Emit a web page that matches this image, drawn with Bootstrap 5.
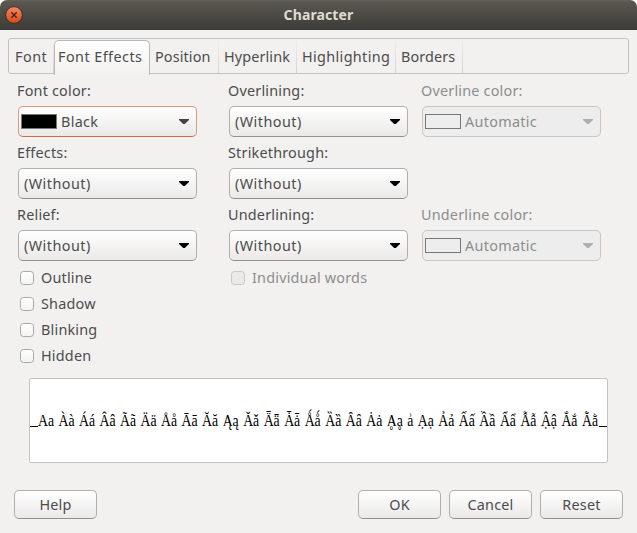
<!DOCTYPE html>
<html lang="en">
<head>
<meta charset="utf-8">
<title>Character</title>
<link href="https://cdn.jsdelivr.net/npm/bootstrap@5.3.0/dist/css/bootstrap.min.css" rel="stylesheet">
<style>
body{width:637px;height:533px;overflow:hidden;background:#fff;color:#4c4c4c;font:14.4px/18px "Noto Sans","Open Sans",sans-serif;letter-spacing:.12px}
.dialog{height:533px;background:#f2f1f0;border-radius:7px 7px 0 0;overflow:hidden}
.titlebar{height:30px;padding:0 5px;background:linear-gradient(#66635a 0,#59574f 2px,#3c3b37 100%);color:#dfdbd2;font-weight:700;font-size:14px}
.close-btn{width:18px;height:18px}
.tabstrip{height:36px;margin:8px 8px 0;border:1px solid #c3c1be;border-radius:3px;padding-left:1px;flex-wrap:nowrap}
.tabstrip .nav-link{padding:2px 0 0 5px;height:34px;color:#4c4c4c;border:0;border-right:1px solid;border-image:linear-gradient(#f2f1f0,#d3d1ce) 1;border-radius:0;white-space:nowrap;display:flex;align-items:center}
.tabstrip .nav-link.active{height:35px;margin-top:1px;padding:0 0 2px 3px;color:#4c4c4c;background:linear-gradient(#fff,#f2f1f0);border:1px solid #bab8b5;border-bottom:0;border-image:none;border-radius:5px 5px 0 0;letter-spacing:.45px}
.t1{width:44px;letter-spacing:.5px}.t2{width:96px}.t3{width:69px}.t4{width:78px}.t5{width:99px;letter-spacing:.35px}.t6{width:67px}
.fields{padding:8px 0 0 18px}
.fcol{width:179px}
.mid{margin:0 14px 0 32px}
.flabel{height:18px;margin:0 0 6px -1px;white-space:nowrap;letter-spacing:.2px}
.combo{height:31px;margin-bottom:7px;padding:0 7px 0 5px;border:1px solid #b1afac;border-bottom-color:#92908e;border-radius:5px;background:linear-gradient(#fff,#ebe9e8);color:#4c4c4c;font-size:inherit;line-height:18px;letter-spacing:.45px}
.combo.focused{border-color:#dc9a80;border-bottom-color:#d0694a}
.combo.off{background:#eeeded;border-color:#c8c6c4;color:#8d8d8c}
.combo.sw{padding-left:2px;letter-spacing:.3px}
.off-text{color:#8d8d8c}
.swatch{width:36px;height:15px;border:1px solid #777;margin-right:4px}
.black{background:#000}
.blank{height:62px}
.check{height:26px;padding-left:2px;letter-spacing:.2px}
.check .form-check-input{width:14px;height:14px;margin:0 7px 0 0;border:1px solid #aaa8a6;border-radius:3.5px;background:linear-gradient(#fff,#f4f3f2)}
.check .form-check-input:disabled{background:#ebeaea;border-color:#c9c7c5;opacity:1}
.preview{height:85px;margin:9px 29px 0;border:1px solid #c6c3c0;border-radius:2px;background:#fff}
.sample{font:16.2px "Liberation Serif",serif;letter-spacing:0;word-spacing:1.2px;fill:#000}
.actions{padding:27px 14px 0}
.dlg-btn{width:83px;height:29px;padding:0;border:1px solid #b1afac;border-bottom-color:#92908e;border-radius:5px;background:linear-gradient(#fff,#ebe9e8);color:#4c4c4c;font-size:14.4px;line-height:18px;letter-spacing:.2px}
</style>
<script src="https://cdn.jsdelivr.net/npm/bootstrap@5.3.0/dist/js/bootstrap.bundle.min.js"></script>
</head>
<body>
<svg class="d-none"><symbol id="arrow" viewBox="0 0 10 6"><path d="M0 0h10v1L5.8 5H4.2L0 1z" fill="currentColor"/></symbol></svg>
<div class="dialog">
  <header class="titlebar d-flex align-items-center">
    <svg class="close-btn" viewBox="0 0 18 18"><defs><linearGradient id="g" x2="0" y2="1"><stop stop-color="#f58a62"/><stop offset="1" stop-color="#dd4714"/></linearGradient></defs><circle cx="9" cy="9" r="8.4" fill="url(#g)" stroke="#33322e"/><path d="M6.3 6.3l5.4 5.4m0-5.4l-5.4 5.4" stroke="#45251a" stroke-width="1.4"/></svg>
    <div class="flex-grow-1 text-center">Character</div><span class="close-btn"></span>
  </header>
  <nav class="nav tabstrip">
    <a class="nav-link t1"><span>Font</span></a><a class="nav-link active t2"><span>Font Effects</span></a><a class="nav-link t3"><span>Position</span></a><a class="nav-link t4"><span>Hyperlink</span></a><a class="nav-link t5"><span>Highlighting</span></a><a class="nav-link t6"><span>Borders</span></a>
  </nav>
  <main class="fields d-flex">
    <section class="fcol">
      <div class="flabel"><span>Font color:</span></div>
      <button class="combo focused sw w-100 d-flex align-items-center"><span class="swatch black"></span><span>Black</span><svg class="ms-auto" width="10" height="6" color="#444"><use href="#arrow"/></svg></button>
      <div class="flabel"><span>Effects:</span></div>
      <button class="combo w-100 d-flex align-items-center"><span>(Without)</span><svg class="ms-auto" width="10" height="6" color="#000"><use href="#arrow"/></svg></button>
      <div class="flabel"><span>Relief:</span></div>
      <button class="combo w-100 d-flex align-items-center mb-1"><span>(Without)</span><svg class="ms-auto" width="10" height="6" color="#000"><use href="#arrow"/></svg></button>
      <label class="check d-flex align-items-center"><input class="form-check-input" type="checkbox"><span>Outline</span></label>
      <label class="check d-flex align-items-center"><input class="form-check-input" type="checkbox"><span>Shadow</span></label>
      <label class="check d-flex align-items-center"><input class="form-check-input" type="checkbox"><span>Blinking</span></label>
      <label class="check d-flex align-items-center"><input class="form-check-input" type="checkbox"><span>Hidden</span></label>
    </section>
    <section class="fcol mid">
      <div class="flabel"><span>Overlining:</span></div>
      <button class="combo w-100 d-flex align-items-center"><span>(Without)</span><svg class="ms-auto" width="10" height="6" color="#000"><use href="#arrow"/></svg></button>
      <div class="flabel"><span>Strikethrough:</span></div>
      <button class="combo w-100 d-flex align-items-center"><span>(Without)</span><svg class="ms-auto" width="10" height="6" color="#000"><use href="#arrow"/></svg></button>
      <div class="flabel"><span>Underlining:</span></div>
      <button class="combo w-100 d-flex align-items-center mb-1"><span>(Without)</span><svg class="ms-auto" width="10" height="6" color="#000"><use href="#arrow"/></svg></button>
      <label class="check off-text d-flex align-items-center"><input class="form-check-input" type="checkbox" disabled><span>Individual words</span></label>
    </section>
    <section class="fcol">
      <div class="flabel off-text"><span>Overline color:</span></div>
      <button class="combo off sw w-100 d-flex align-items-center"><span class="swatch"></span><span>Automatic</span><svg class="ms-auto" width="10" height="6" color="#b0afad"><use href="#arrow"/></svg></button>
      <div class="blank"></div>
      <div class="flabel off-text"><span>Underline color:</span></div>
      <button class="combo off sw w-100 d-flex align-items-center"><span class="swatch"></span><span>Automatic</span><svg class="ms-auto" width="10" height="6" color="#b0afad"><use href="#arrow"/></svg></button>
    </section>
  </main>
  <div class="preview">
    <svg class="d-block" width="577" height="83"><path d="M0 47.5h8M569 47.5h8" stroke="#000"/><text class="sample" x="8" y="47" textLength="560" lengthAdjust="spacingAndGlyphs">Aa Àà Áá Ââ Ãã Ää Åå Āā Ăă Ąą Ǎǎ Ǟǟ Ǡǡ Ǻǻ Ȁȁ Ȃȃ Ȧȧ Ḁḁ ẚ Ạạ Ảả Ấấ Ầầ Ẩẩ Ẫẫ Ậậ Ắắ Ằằ</text></svg>
  </div>
  <footer class="actions d-flex gap-2">
    <button class="dlg-btn me-auto">Help</button><button class="dlg-btn">OK</button><button class="dlg-btn">Cancel</button><button class="dlg-btn">Reset</button>
  </footer>
</div>
</body>
</html>
